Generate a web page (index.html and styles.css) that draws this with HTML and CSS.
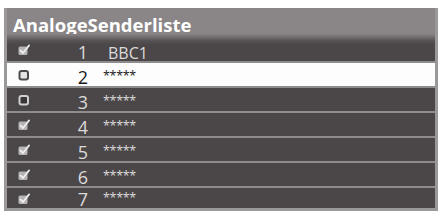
FILE: index.html
```html
<!DOCTYPE html>
<html lang="de">
<head>
<meta charset="utf-8">
<title>AnalogeSenderliste</title>
<link rel="stylesheet" href="styles.css">
</head>
<body>
<div class="panel">
  <div class="title">AnalogeSenderliste</div>
  <div class="list">
    <div class="row first">
      <svg class="icon" viewBox="0 0 12 12"><rect x="0.5" y="2.5" width="9" height="8.5" rx="1.5" fill="#b5b3b4"/><path d="M2.5 6.5 L5 9 L11 1.5" fill="none" stroke="#ececec" stroke-width="2" stroke-linecap="round" stroke-linejoin="round"/></svg>
      <span class="num">1</span><span class="name">BBC1</span>
    </div>
    <div class="row sel">
      <svg class="icon" viewBox="0 0 12 12"><rect x="1.5" y="2" width="8.5" height="8.5" rx="2" fill="#e4e4e4" stroke="#4a4a4a" stroke-width="2"/></svg>
      <span class="num">2</span><span class="stars">*****</span>
    </div>
    <div class="row">
      <svg class="icon" viewBox="0 0 12 12"><rect x="1.5" y="2" width="8.5" height="8.5" rx="2" fill="#3a3637" stroke="#d0d0d0" stroke-width="2"/></svg>
      <span class="num">3</span><span class="stars">*****</span>
    </div>
    <div class="row">
      <svg class="icon" viewBox="0 0 12 12"><rect x="0.5" y="2.5" width="9" height="8.5" rx="1.5" fill="#b5b3b4"/><path d="M2.5 6.5 L5 9 L11 1.5" fill="none" stroke="#ececec" stroke-width="2" stroke-linecap="round" stroke-linejoin="round"/></svg>
      <span class="num">4</span><span class="stars">*****</span>
    </div>
    <div class="row">
      <svg class="icon" viewBox="0 0 12 12"><rect x="0.5" y="2.5" width="9" height="8.5" rx="1.5" fill="#b5b3b4"/><path d="M2.5 6.5 L5 9 L11 1.5" fill="none" stroke="#ececec" stroke-width="2" stroke-linecap="round" stroke-linejoin="round"/></svg>
      <span class="num">5</span><span class="stars">*****</span>
    </div>
    <div class="row">
      <svg class="icon" viewBox="0 0 12 12"><rect x="0.5" y="2.5" width="9" height="8.5" rx="1.5" fill="#b5b3b4"/><path d="M2.5 6.5 L5 9 L11 1.5" fill="none" stroke="#ececec" stroke-width="2" stroke-linecap="round" stroke-linejoin="round"/></svg>
      <span class="num">6</span><span class="stars">*****</span>
    </div>
    <div class="row last">
      <svg class="icon" viewBox="0 0 12 12"><rect x="0.5" y="2.5" width="9" height="8.5" rx="1.5" fill="#b5b3b4"/><path d="M2.5 6.5 L5 9 L11 1.5" fill="none" stroke="#ececec" stroke-width="2" stroke-linecap="round" stroke-linejoin="round"/></svg>
      <span class="num">7</span><span class="stars">*****</span>
    </div>
  </div>
</div>
</body>
</html>
```
FILE: styles.css
```css
html, body {
  margin: 0;
  padding: 0;
  background: #ffffff;
}
body {
  font-family: "Open Sans", "Liberation Sans", sans-serif;
}
.panel {
  width: 428px;
  margin: 8px 0 0 4px;
  border: 3px solid #9b9899;
  border-top: 0;
  background: #8f8c8d;
}
.title {
  height: 26px;
  display: flex;
  align-items: flex-end;
  padding-left: 6px;
  font-size: 18.5px;
  font-weight: 700;
  line-height: 1;
  color: #ffffff;
  background: #8a8687;
}
.list {
  display: flex;
  flex-direction: column;
  gap: 2px;
}
.row {
  height: 23px;
  display: grid;
  grid-template-columns: 12px 58px auto;
  column-gap: 0;
  align-items: end;
  padding-left: 11px;
  background: #4b4748;
  color: #dcdadb;
  line-height: 1;
}
.row.first {
  height: 27px;
  background: linear-gradient(#878384 0, #7a7677 2px, #555152 7px, #4b4748 11px);
}
.row.last {
  height: 20px;
}
.row.sel {
  background: #fdfdfd;
  color: #1a1a1a;
}
.icon {
  width: 12px;
  height: 12px;
  margin-bottom: 5px;
}
.row.last .icon {
  margin-bottom: 3px;
}
.num {
  font-size: 18px;
  text-align: right;
  font-weight: 400;
}
.name {
  font-size: 16px;
  padding-left: 20px;
  font-weight: 400;
}
.stars {
  font-size: 12.5px;
  padding-left: 15px;
  margin-bottom: 4px;
  letter-spacing: -0.3px;
}
```
